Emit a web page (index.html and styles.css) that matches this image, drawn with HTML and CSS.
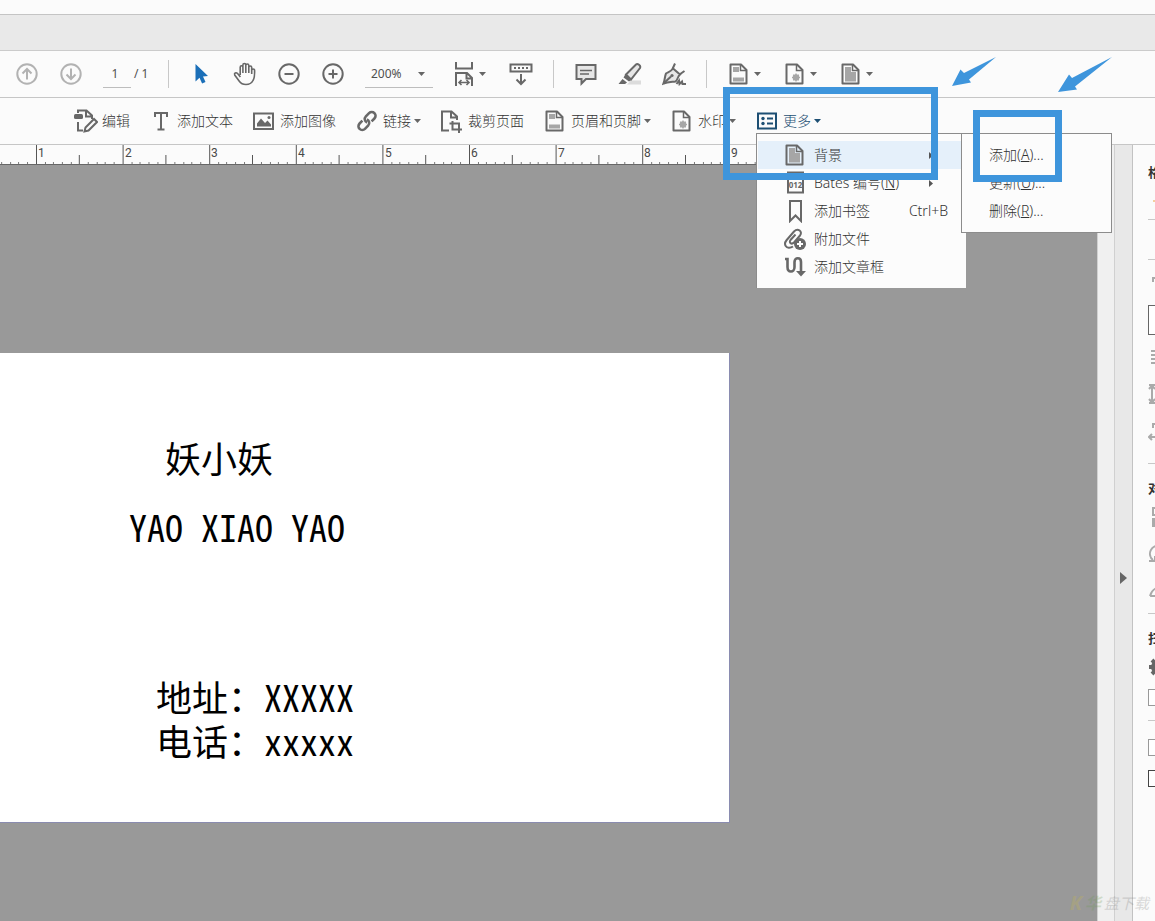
FILE: index.html
```html
<!DOCTYPE html>
<html lang="zh-CN">
<head>
<meta charset="utf-8">
<title>PDF</title>
<link rel="stylesheet" href="styles.css">
</head>
<body>
<svg class="defs" aria-hidden="true">
  <symbol id="caret" viewBox="0 0 7 4"><path d="M0 0h7L3.500 4z" fill="currentColor"/></symbol>
  <symbol id="doc-header" viewBox="0 0 24 24"><path d="M3.500 2.500H14L19.500 8v13.500h-16z" fill="none" stroke="currentColor" stroke-width="2" stroke-linejoin="round"/><path d="M13.500 3v5.500h6" fill="none" stroke="currentColor" stroke-width="1.500"/><path d="M6 5h6v5H6zM6 15.500h11v4H6z" fill="#a6a6a6"/></symbol>
  <symbol id="doc-mark" viewBox="0 0 24 24"><path d="M3.500 2.500H14L19.500 8v13.500h-16z" fill="none" stroke="currentColor" stroke-width="2" stroke-linejoin="round"/><path d="M13.500 3v5.500h6" fill="none" stroke="currentColor" stroke-width="1.500"/><circle cx="13" cy="15.500" r="3.200" fill="#a6a6a6"/><path d="M13 11.500v8M9 15.500h8M10.200 12.700l5.600 5.600M15.800 12.700l-5.600 5.600" stroke="#a6a6a6" stroke-width="1.300"/></symbol>
  <symbol id="doc-fill" viewBox="0 0 24 24"><path d="M3.500 2.500H14L19.500 8v13.500h-16z" fill="none" stroke="currentColor" stroke-width="2" stroke-linejoin="round"/><path d="M13.500 3v5.500h6" fill="none" stroke="currentColor" stroke-width="1.500"/><path d="M6 5h6v5h5v9.500H6z" fill="#a6a6a6"/></symbol>
</svg>

<div class="app">
  <div class="title-strip"></div>
  <div class="tab-strip"></div>

  <div class="toolbar main-bar">
    <button class="tool faded" aria-label="上一页"><svg class="icon" viewBox="0 0 24 24"><circle cx="12" cy="12" r="9.700"/><path d="M12 17.500V7M7.500 11.500L12 7l4.500 4.500"/></svg></button>
    <button class="tool faded" aria-label="下一页"><svg class="icon" viewBox="0 0 24 24"><circle cx="12" cy="12" r="9.700"/><path d="M12 6.500V17M7.500 12.500L12 17l4.500-4.500"/></svg></button>
    <label class="page-no"><input type="text" value="1" aria-label="页码"><span>/ 1</span></label>
    <span class="sep"></span>
    <button class="tool" aria-label="选择"><svg class="icon" viewBox="0 0 24 24"><path class="blue" d="M6.500 2v17.500l4-3.800 2.600 5.800 3.400-1.600-2.500-5.400 5-.5z"/></svg></button>
    <button class="tool" aria-label="手形"><svg class="icon" viewBox="0 0 24 24"><path class="thin" d="M7.200 13V5.200c0-2 2.700-2 2.700 0V11M9.900 6V3c0-2.100 2.900-2.100 2.900 0v8M12.800 3.500c0-2.100 3-2.100 3 0V11M15.800 5.500c0-2 2.900-2 2.900 0V12M18.700 8.500c0-2 2.900-2 2.900 0 0 4 .3 7-1.600 10-1.200 2.400-3.400 4-7 4-3.200 0-5.200-1-6.700-3.200L1.700 13c-.8-1.800 1.200-3 2.700-1.700L7.400 15"/></svg></button>
    <button class="tool" aria-label="缩小"><svg class="icon" viewBox="0 0 24 24"><circle cx="12" cy="12" r="9.700"/><path d="M7.500 12h9"/></svg></button>
    <button class="tool" aria-label="放大"><svg class="icon" viewBox="0 0 24 24"><circle cx="12" cy="12" r="9.700"/><path d="M7.500 12h9M12 7.500v9"/></svg></button>
    <span class="zoom-box"><select aria-label="缩放"><option>200%</option></select><svg class="caret"><use href="#caret"/></svg></span>
    <button class="tool fit" aria-label="适合宽度"><svg class="icon" viewBox="0 0 24 24"><path d="M4 0v6.500h16V0M4 24V11h11l5 5v8M14.500 11v5.500H20"/><path class="thin" d="M7 20.500h10M9.500 18L7 20.500 9.500 23M14.500 18l2.500 2.500-2.500 2.500"/></svg><svg class="caret"><use href="#caret"/></svg></button>
    <button class="tool" aria-label="隐藏工具栏"><svg class="icon" viewBox="0 0 24 24"><path d="M1.500 2.500h21v7h-21z"/><path d="M5 6h14" stroke-dasharray="2 2"/><path d="M12 12v10M7.500 17.500L12 22l4.500-4.500"/></svg></button>
    <span class="sep"></span>
    <button class="tool" aria-label="附注"><svg class="icon" viewBox="0 0 24 24"><path class="shade" d="M2.500 3h19v14H12l-4.500 4.500V17h-5z"/><path class="thin" d="M6 8.500h12M6 12h9"/></svg></button>
    <button class="tool" aria-label="高亮"><svg class="icon" viewBox="0 0 24 24"><path class="pale" d="M13 18.500h10v4H9z"/><path class="shade" d="M8 12.500L18 2.500c1.500-1.300 5.200 1 4 3.500l-9 11.500z"/><path class="solid" d="M7.500 12l6.500 5.500-3 2L5.500 15.500zM4.500 17l4.500 3.500-2 1.500H.5z"/></svg></button>
    <button class="tool" aria-label="签名"><svg class="icon" viewBox="0 0 24 24"><path class="shade" d="M1.500 21.500C3 18 2.500 15 4 11.500c2-1.500 4.500-1.500 7-5l7 6c-2.500 2-2 5-4.500 7-4 .5-8 .5-12 2z"/><path d="M10.500 7L13 1.500M17.500 12.500l5-3.500M1.500 21.500L9 14.500"/><circle class="solid" cx="10" cy="13.500" r="1.600"/><path d="M14.500 22l2.500-3.500.5 3.500 2.500-2.500.5 2.500H24"/></svg></button>
    <span class="sep"></span>
    <button class="tool wide" aria-label="页眉和页脚"><svg class="icon"><use href="#doc-header"/></svg><svg class="caret"><use href="#caret"/></svg></button>
    <button class="tool wide" aria-label="水印"><svg class="icon"><use href="#doc-mark"/></svg><svg class="caret"><use href="#caret"/></svg></button>
    <button class="tool wide" aria-label="背景"><svg class="icon"><use href="#doc-fill"/></svg><svg class="caret"><use href="#caret"/></svg></button>
  </div>

  <div class="toolbar edit-bar">
    <button class="action"><svg class="icon" viewBox="0 0 24 24"><path d="M4 4V1.500h8.500l5.500 5V10M12 2v5.500h6M4 13v8.500h5"/><rect class="solid" x="0" y="5" width="9" height="5" rx="1.500"/><path d="M10.500 22.500l1-4 8.500-8.500 3 3-8.500 8.500z"/></svg>编辑</button>
    <button class="action"><svg class="icon" viewBox="0 0 24 24"><path d="M6 8V4h12v4M12 4v16M8.500 20.500h7"/></svg>添加文本</button>
    <button class="action"><svg class="icon" viewBox="0 0 24 24"><rect x="2" y="4.500" width="19" height="15.500"/><path class="solid" d="M5 17.500v-3l4-5 4 4.500 2.500-2.500 3.500 4v2z"/><circle class="solid" cx="17" cy="8.500" r="1.500"/></svg>添加图像</button>
    <button class="action"><svg class="icon" viewBox="0 0 24 24"><g class="heavy" transform="rotate(-45 12 12)"><path d="M15 15.500H19a3.800 3.800 0 0 0 0-7.600h-4.500a3.800 3.800 0 0 0-3.500 5.200"/><path d="M9 8.500H5a3.800 3.800 0 0 0 0 7.600h4.500a3.800 3.800 0 0 0 3.500-5.200"/></g></svg>链接<svg class="caret"><use href="#caret"/></svg></button>
    <button class="action"><svg class="icon" viewBox="0 0 24 24"><path d="M9 21.500H2v-19H11.500l5.500 5V11M11 3v5.500h6"/><path d="M12.500 12v8.500H22M9.500 14.500H19V24"/></svg>裁剪页面</button>
    <button class="action"><svg class="icon"><use href="#doc-header"/></svg>页眉和页脚<svg class="caret"><use href="#caret"/></svg></button>
    <button class="action"><svg class="icon"><use href="#doc-mark"/></svg>水印<svg class="caret"><use href="#caret"/></svg></button>
    <button class="action active" aria-expanded="true"><svg class="icon" viewBox="0 0 24 24"><rect x="3" y="4.500" width="18" height="15"/><circle class="solid" cx="8" cy="9.500" r="1.700"/><circle class="solid" cx="8" cy="14.500" r="1.700"/><path d="M12 9.500h6M12 14.500h6"/></svg>更多<svg class="caret"><use href="#caret"/></svg></button>
  </div>

  <div class="workspace">
    <main class="document">
      <svg class="ruler" aria-label="标尺">
        <defs><pattern id="ticks" x="36" width="86.600" height="20" patternUnits="userSpaceOnUse"><path d="M.5 0v20M43.500 10v10" stroke="#555"/><path d="M9.500 17v3M17.500 17v3M26.500 17v3M35.500 17v3M52.500 17v3M61.500 17v3M69.500 17v3M78.500 17v3" stroke="#777"/></pattern></defs>
        <rect width="100%" height="20" fill="url(#ticks)"/>
        <g class="ruler-text"><text x="38" y="12">1</text><text x="125" y="12">2</text><text x="211" y="12">3</text><text x="298" y="12">4</text><text x="385" y="12">5</text><text x="471" y="12">6</text><text x="558" y="12">7</text><text x="644" y="12">8</text><text x="731" y="12">9</text></g>
      </svg>
      <div class="canvas">
        <article class="card">
          <p class="name">妖小妖</p>
          <p class="pinyin">YAO XIAO YAO</p>
          <p class="contact">地址：XXXXX<br>电话：xxxxx</p>
        </article>
      </div>
    </main>
    <div class="scrollbar"></div>
    <button class="splitter" aria-label="展开面板"><svg viewBox="0 0 7 12"><path d="M0 0l7 6-7 6z" fill="#666"/></svg></button>
    <aside class="panel">
      <section class="group">
        <h2>格</h2>
        <div class="row swatch"><i></i></div>
        <div class="row tall ruled"></div>
        <div class="row tall"><svg class="picon" viewBox="0 0 24 24"><path d="M5 13V9h6"/></svg></div>
        <div class="row"><input class="field" type="text" aria-label="字体"></div>
        <div class="row"><svg class="picon" viewBox="0 0 24 24"><path d="M3 6h18M3 10h18M3 14h18M3 18h18"/></svg></div>
        <div class="row"><svg class="picon" viewBox="0 0 24 24"><path d="M4 4v16M1 7l3-3.500L7 7M1 17l3 3.500L7 17M1 3h8M1 21h8"/></svg></div>
        <div class="row tall"><svg class="picon" viewBox="0 0 24 24"><path d="M5 7V3h8M1 16h16M4 13l-3 3 3 3"/></svg></div>
      </section>
      <section class="group">
        <h2>对</h2>
        <div class="row"><svg class="picon" viewBox="0 0 24 24"><path d="M5 3h12v7H5z"/><path class="grey" d="M4 13h14v9H4z"/></svg></div>
        <div class="row"><svg class="picon" viewBox="0 0 24 24"><path d="M12 4a8 8 0 0 0-7 14M1 19h6v-5"/></svg></div>
        <div class="row"><svg class="picon" viewBox="0 0 24 24"><path d="M2 17c2-7 6-9 13-9M2 17h8"/></svg></div>
      </section>
      <section class="group near">
        <h2>扫</h2>
        <div class="row"><svg class="picon dark" viewBox="0 0 24 24"><circle cx="10" cy="12" r="5"/><path d="M1 12h5M4 5l3 3M4 19l3-3"/></svg></div>
        <div class="row short"><input type="checkbox" aria-label="选项一"></div>
      </section>
      <section class="group padded">
        <div class="row"><input type="checkbox" aria-label="选项二"></div>
        <div class="row short"><input class="strong" type="checkbox" aria-label="选项三"></div>
      </section>
    </aside>
  </div>

  <menu class="menu more-menu">
    <li><button class="hover"><svg class="icon"><use href="#doc-fill"/></svg><span>背景</span><svg class="arrow" viewBox="0 0 4 7"><path d="M0 0l4 3.500L0 7z"/></svg></button></li>
    <li><button><svg class="icon" viewBox="0 0 24 24"><path d="M5 1.500h15v20H5z"/><text class="digits" x="12.500" y="17">012</text></svg><span>Bates 编号(<u>N</u>)</span><svg class="arrow" viewBox="0 0 4 7"><path d="M0 0l4 3.500L0 7z"/></svg></button></li>
    <li><button><svg class="icon" viewBox="0 0 24 24"><path d="M7 2h11v20l-5.500-5.500L7 22z"/></svg><span>添加书签</span><kbd>Ctrl+B</kbd></button></li>
    <li><button><svg class="icon" viewBox="0 0 24 24"><path d="M10 19.500c-3 2-6 1.500-7.300-.5-1.300-2-.7-4 1-6L11 4.500c4-4 9 0 6 4l-6 7c-2.500 2.500-5.500 0-3.500-2.500l5-5.500"/><circle class="solid" cx="17" cy="17" r="6"/><path class="plus" d="M17 14v6M14 17h6"/></svg><span>附加文件</span></button></li>
    <li><button><svg class="icon" viewBox="0 0 24 24"><path class="heavy" d="M2 4h2.500v8c0 6 7 6 7 0V7c0-5 6.500-5 6.500 0v11"/><path class="solid" d="M13 16h10l-5 5.500z"/></svg><span>添加文章框</span></button></li>
  </menu>
  <menu class="menu sub-menu">
    <li><button>添加(<u>A</u>)...</button></li>
    <li><button>更新(<u>U</u>)...</button></li>
    <li><button>删除(<u>R</u>)...</button></li>
  </menu>

  <div class="marker marker-menu"></div>
  <div class="marker marker-add"></div>
  <svg class="pointer pointer-menu" viewBox="0 0 44 29"><path d="M0 29L8.500 12.500 12 16 44 0 17 22.500 19 25.500z"/></svg>
  <svg class="pointer pointer-add" viewBox="0 0 54 35"><path d="M0 35L11 17.500 14 21 54 0 17 29.500 19 32.500z"/></svg>
  <div class="watermark"><b>K</b><b class="green">华</b><span>盘下载</span></div>
</div>
</body>
</html>
```

FILE: styles.css
```css
* { box-sizing: border-box; }
body {
  margin: 0;
  overflow: hidden;
  font: 14px/20px "Noto Sans", "Noto Sans CJK SC", sans-serif;
  font-weight: 300;
  color: #333;
}
p, h2, menu { margin: 0; padding: 0; }
button, input, select { font: inherit; color: inherit; }
button { border: 0; padding: 0; background: none; }
.defs { position: absolute; width: 0; height: 0; }

.app {
  position: relative;
  display: flex;
  flex-direction: column;
  height: 100vh;
  background: #fbfbfb;
}
.title-strip { height: 15px; flex: none; border-bottom: 1px solid #c4c4c4; }
.tab-strip { height: 36px; flex: none; background: #e9e9e9; border-bottom: 1px solid #cbcbcb; }
.toolbar {
  display: flex;
  align-items: center;
  height: 47px;
  flex: none;
  border-bottom: 1px solid #c6c6c6;
  white-space: nowrap;
}
.icon {
  width: 24px;
  height: 24px;
  flex: none;
  color: #686868;
  fill: none;
  stroke: currentColor;
  stroke-width: 2;
}
.icon use { stroke: none; }
.icon .thin { stroke-width: 1.6; }
.icon .heavy { stroke-width: 2.6; }
.icon .solid { fill: currentColor; stroke: none; }
.icon .blue { fill: #1b6fb8; stroke: none; }
.icon .shade { fill: #e6e6e6; }
.icon .pale { fill: #dcdcdc; stroke: none; }
.icon .plus { stroke: #fff; }
.icon .digits { fill: currentColor; stroke: none; font: bold 8px "Noto Sans", sans-serif; text-anchor: middle; }
.caret { width: 7px; height: 4px; flex: none; color: #666; }

.main-bar { padding-left: 5px; font-size: 12px; font-weight: 400; color: #505050; }
.tool {
  display: flex;
  align-items: center;
  justify-content: center;
  width: 44px;
  height: 44px;
  flex: none;
}
.tool.faded .icon { color: #b2b2b2; }
.tool.wide { width: 56px; gap: 3px; padding-right: 3px; }
.tool.fit { gap: 3px; margin: 0 8px 0 14px; }
.page-no { display: flex; align-items: center; gap: 3px; width: 65px; padding-left: 10px; }
.page-no input {
  width: 28px;
  height: 28px;
  padding: 0 4px 0 0;
  border: 0;
  border-bottom: 1px solid #bdbdbd;
  background: none;
  text-align: center;
}
.sep { width: 1px; height: 28px; margin: 0 10px; flex: none; background: #c8c8c8; }
.zoom-box { display: flex; align-items: center; width: 68px; height: 28px; margin-left: 10px; padding-right: 8px; border-bottom: 1px solid #bdbdbd; }
.zoom-box select { appearance: none; flex: 1; min-width: 0; padding: 0 0 0 6px; border: 0; background: none; }

.edit-bar { gap: 19px; padding-left: 74px; }
.action { display: flex; align-items: center; flex: none; }
.action .icon { margin-right: 4px; }
.action .caret { margin-left: 3px; }
.action.active, .action.active .icon, .action.active .caret { color: #1d4f73; }

.workspace { display: flex; flex: 1; min-height: 0; }
.document { display: flex; flex-direction: column; flex: 1; min-width: 0; background: #999; }
.ruler { width: 100%; height: 20px; flex: none; background: #fbfbfb; border-bottom: 1px solid #666; shape-rendering: crispEdges; }
.ruler-text { font-family: Roboto, sans-serif; font-size: 12px; font-weight: 400; fill: #484848; }
.canvas { flex: 1; padding-top: 188px; }
.card {
  width: 730px;
  height: 470px;
  padding: 82px 0 0 129px;
  background: #fff;
  border: solid #8a8cb0;
  border-width: 0 1px 1px 0;
  color: #000;
  font: 36px/44px "Noto Sans CJK SC", sans-serif;
  font-feature-settings: "hwid";
}
.name { padding-left: 36px; }
.pinyin { margin-top: 25px; }
.contact { margin-top: 126px; padding-left: 27px; }

.scrollbar { width: 18px; flex: none; background: #f0f0f0; border: solid #d0d0d0; border-width: 0 1px; }
.splitter { display: flex; align-items: center; justify-content: center; width: 18px; flex: none; padding-top: 90px; background: #e8e8e8; border-right: 1px solid #c2c2c2; }
.splitter svg { width: 7px; height: 12px; }

.panel { width: 22px; flex: none; padding: 3px 0 0 15px; overflow: hidden; }
.group { width: 240px; }
.group + .group { border-top: 1px solid #c8c8c8; margin-top: 10px; }
.group + .group.near { margin-top: 4px; }
.group.padded { padding-top: 8px; }
.group h2 { padding-top: 14px; font-size: 13px; line-height: 20px; color: #333; }
.row { display: flex; align-items: center; height: 37px; }
.row.tall { height: 41px; }
.row.short { height: 25px; }
.row.ruled { border: solid #c8c8c8; border-width: 1px 0; }
.swatch i { width: 12px; height: 2px; margin-left: 5px; background: #f4cf9f; }
.picon { width: 24px; height: 24px; fill: none; stroke: #aaa; stroke-width: 2; }
.picon.dark { stroke: #666; stroke-width: 4; }
.picon .grey { fill: #aaa; stroke: none; }
.field { width: 200px; height: 30px; border: 1px solid #666; background: #fff; }
.panel input[type="checkbox"] { appearance: none; width: 17px; height: 17px; margin: 0; border: 1px solid #999; background: #fff; }
.panel input.strong { border-color: #444; }

.menu { position: absolute; list-style: none; background: #fcfcfc; border: 1px solid #8c8c8c; white-space: nowrap; }
.menu button { display: flex; align-items: center; width: 100%; height: 28px; text-align: left; }
.more-menu { left: 756px; top: 133px; width: 210px; padding: 7px 0 7px 1px; border-width: 1px 0 0 1px; }
.more-menu button { padding: 0 18px 0 25px; }
.more-menu .hover { background: #e5f0fa; }
.more-menu .icon { margin-right: 7px; }
.more-menu span { flex: 1; }
.more-menu .arrow { width: 4px; height: 7px; margin-right: 15px; fill: #555; }
.more-menu kbd { font: inherit; }
.sub-menu { left: 961px; top: 133px; width: 151px; padding: 7px 0; }
.sub-menu button { padding-left: 27px; }

.marker { position: absolute; border: 7px solid #3e95dc; }
.marker-menu { left: 723px; top: 87px; width: 215px; height: 93px; }
.marker-add { left: 973px; top: 110px; width: 89px; height: 72px; }
.pointer { position: absolute; fill: #3e95dc; }
.pointer-menu { left: 952px; top: 57px; width: 44px; }
.pointer-add { left: 1058px; top: 57px; width: 54px; }
.watermark {
  position: absolute;
  right: 6px;
  bottom: 8px;
  display: flex;
  align-items: center;
  gap: 3px;
  font-size: 15px;
  font-style: italic;
  font-weight: 400;
  color: #777;
  opacity: .25;
}
.watermark b { color: #c9b94a; font-size: 20px; }
.watermark .green { color: #6d9a55; font-size: 16px; }
```
